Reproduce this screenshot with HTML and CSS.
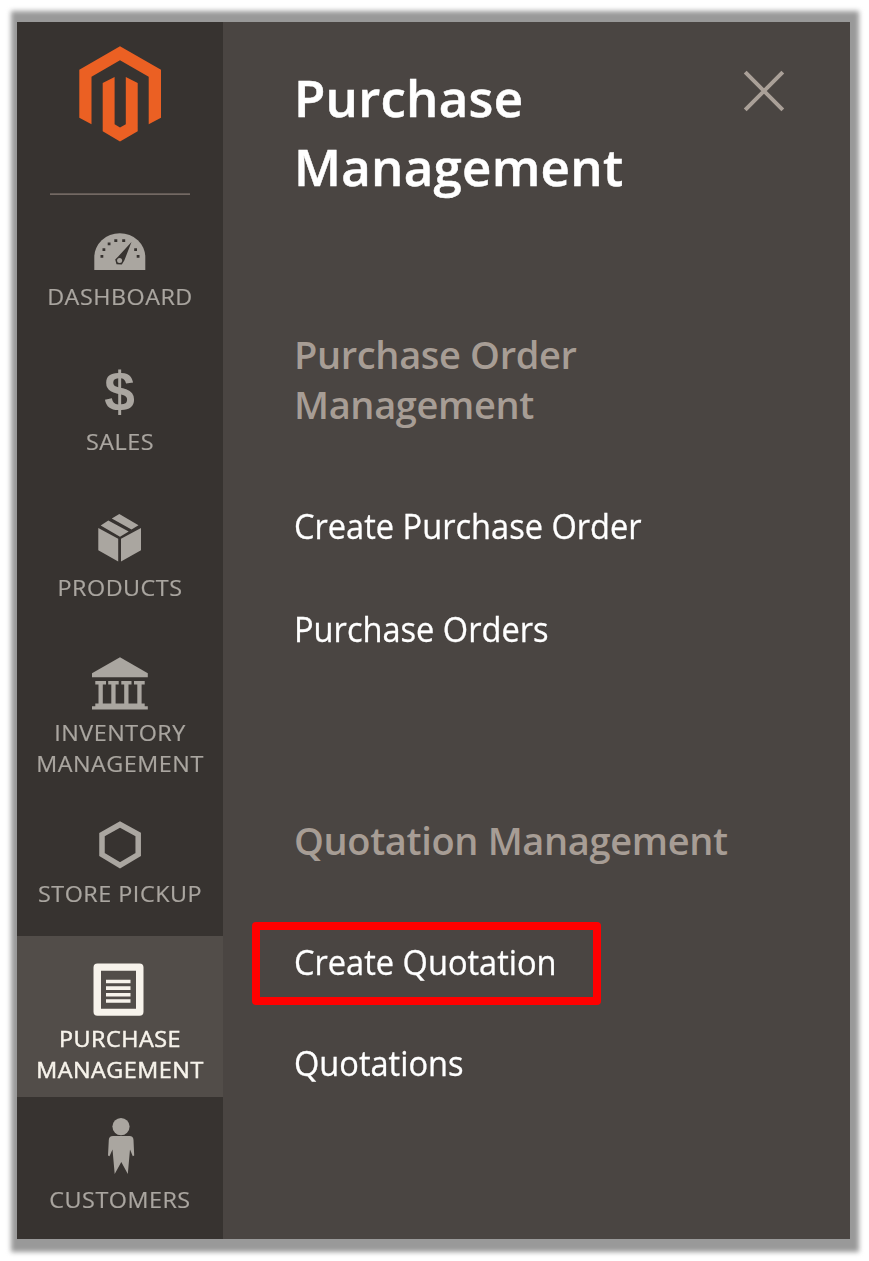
FILE: index.html
```html
<!DOCTYPE html>
<html lang="en">
<head>
<meta charset="utf-8">
<title>Purchase Management</title>
<link rel="stylesheet" href="styles.css">
</head>
<body>
<main class="frame">
  <nav class="sidebar">
    <div class="logo">
      <svg width="206" height="172" viewBox="17 22 206 172">
        <path fill="#eb6023" d="M120 46.3 161 69.7V117.7L148.700 124.300V76.700L120 60.200 91.500 76.700V124.300L79.300 117.700V69.700z"/>
        <path fill="#eb6023" d="M114.600 77V124.300L120 127.600 125.800 124.300V77L137.700 83V131.200L120 141.600 102.700 131.200V83z"/>
      </svg>
    </div>
    <a class="item">
      <svg class="icon" viewBox="17 194 206 87">
        <path d="M94.300 270V257a25.500 23.700 0 0 1 51 0v13z"/>
        <g class="cut">
          <path d="M131.500 242 124.300 260.500 121.800 264.500 116.500 264.300 115.200 259.500 118.200 256.500z"/>
          <path d="M100.500 255h2.800v2.800h-2.800zM102.500 248.300h2.800v2.800h-2.800zM107.700 242.500h2.800v2.800h-2.800zM114.300 239.300h3v2.600h-3zM122.200 239.300h3v2.600h-3zM134.200 248.300h2.800v2.800h-2.800zM136.700 255h2.800v2.800h-2.800z"/>
        </g>
        <circle cx="119.6" cy="260.6" r="2.5"/>
      </svg>
      <span class="label">Dashboard</span>
    </a>
    <a class="item">
      <svg class="icon" viewBox="17 339.500 206 87"><text class="dollar" x="119.600" y="411.500" text-anchor="middle">$</text></svg>
      <span class="label">Sales</span>
    </a>
    <a class="item">
      <svg class="icon" viewBox="17 484.700 206 87">
        <path d="M98.300 527.700 118.200 538.500V561.200L98.300 550zM141 527.700 121 538.500V561.200L141 550zM100.700 525.300 108.300 520.300 128.700 531.200 120 536.400zM111.800 518.200 119.300 513.600 138.500 525 131.500 529.300z"/>
      </svg>
      <span class="label">Products</span>
    </a>
    <a class="item">
      <svg class="icon" viewBox="17 630 206 87">
        <path d="M120 657.300 147.800 673.300V677.300H92V673.300z"/>
        <path d="M95.300 681H106V684.500H95.300zM108.200 681H118.700V684.500H108.200zM121.300 681H131.500V684.500H121.300zM134 681H144.700V684.500H134zM98.500 684H102.800V704H98.500zM111.300 684H115.600V704H111.300zM124.200 684H128.500V704H124.200zM137.300 684H141.600V704H137.300zM95.300 703.500H144.700V706.300H147.800V709.500H92V706.300H95.300z"/>
      </svg>
      <span class="label">Inventory<br>Management</span>
    </a>
    <a class="item">
      <svg class="icon" viewBox="17 791 206 87"><path class="outline" d="M120 824.500 138.200 834.500V854.500L120 865.300 102 854.500V834.500z"/></svg>
      <span class="label">Store Pickup</span>
    </a>
    <a class="item active">
      <svg class="icon" viewBox="17 936.300 206 87">
        <path fill-rule="evenodd" d="M97.500 963.900H139.500a4 4 0 0 1 4 4V1012a4 4 0 0 1-4 4H97.500a4 4 0 0 1-4-4V967.900a4 4 0 0 1 4-4zM101 971V1009H136V971z"/>
        <path d="M106 980H130.500v3.600H106zM106 986.600H130.500v3.600H106zM106 993.200H130.500v3.500H106zM106 999.600H130.500v3.500H106z"/>
      </svg>
      <span class="label">Purchase<br>Management</span>
    </a>
    <a class="item">
      <svg class="icon" viewBox="17 1097 206 87">
        <circle cx="121" cy="1126.600" r="8.600"/>
        <path d="M113 1136H129.500Q133.300 1136 133.500 1140L134.200 1155.500 132.800 1156.300 130 1149.500 127.800 1174 121.300 1162 114.700 1174 112.500 1149.500 109.500 1156.300 108 1155.500 108.800 1140Q109 1136 113 1136z"/>
      </svg>
      <span class="label">Customers</span>
    </a>
  </nav>
  <section class="submenu">
    <header class="head">
      <h1 class="title">Purchase<br>Management</h1>
      <svg class="close" width="42" height="42" viewBox="0 0 42 42"><path d="M2.200 2.200 39.800 39.800M39.800 2.200 2.200 39.800"/></svg>
    </header>
    <div class="group">
      <h2 class="group-title">Purchase Order<br>Management</h2>
      <a class="link"><span class="link-text">Create Purchase Order</span></a>
      <a class="link"><span class="link-text">Purchase Orders</span></a>
    </div>
    <div class="group second">
      <h2 class="group-title">Quotation Management</h2>
      <a class="link marked"><span class="link-text">Create Quotation</span></a>
      <a class="link"><span class="link-text">Quotations</span></a>
    </div>
  </section>
</main>
</body>
</html>
```
FILE: styles.css
```css
*, *::before, *::after { box-sizing: border-box; }
body {
  margin: 0;
  padding: 22px 19px 22px 17px;
  background: #fff;
  font-family: "Open Sans", "Noto Sans", sans-serif;
}
.frame {
  position: relative;
  display: flex;
  width: 833px;
  height: 1217px;
}
.frame::before {
  content: "";
  position: absolute;
  z-index: -1;
  inset: -11px -9px -13px -6px;
  background: #999;
  filter: blur(2.5px);
}
.sidebar {
  width: 206px;
  background: #373330;
  overflow: hidden;
}
.logo {
  height: 172px;
  background: linear-gradient(#504a45, #736963) 33px 171px / 140px 1px no-repeat;
}
.logo svg { display: block; }
.logo + .item {
  background: linear-gradient(#736963, #736963) 33px 0 / 140px 1px no-repeat;
}
.item {
  display: block;
  min-height: 145.300px;
  padding-bottom: 12px;
  color: #aaa6a0;
}
.icon {
  display: block;
  width: 206px;
  height: 87px;
  fill: currentColor;
}
.cut { fill: #373330; }
.outline { fill: none; stroke: currentColor; stroke-width: 5.500; }
.dollar { font: bold 55px "Liberation Sans", Arial, sans-serif; }
.label {
  display: block;
  font-size: 22.400px;
  line-height: 31px;
  text-align: center;
  text-transform: uppercase;
  letter-spacing: 0.500px;
  white-space: nowrap;
  transform: scaleX(1.042);
  -webkit-text-stroke: 0.200px currentColor;
}
.active { background: #524d49; color: #f7f3eb; }
.active .label { -webkit-text-stroke-width: 0.500px; }
.submenu {
  flex: 1;
  padding: 41px 65px 0 71px;
  background: #4a4542;
}
.head {
  display: flex;
  justify-content: space-between;
  align-items: flex-start;
}
.title {
  margin: 0;
  color: #fff;
  font-size: 51px;
  font-weight: 600;
  line-height: 69px;
  letter-spacing: 0.250px;
  -webkit-text-stroke: 0.500px currentColor;
}
.close {
  margin-top: 7px;
  fill: none;
  stroke: #aaa098;
  stroke-width: 4;
}
.group { margin-top: 128px; }
.group.second { margin-top: 163px; }
.group-title {
  margin: 0 0 74px;
  color: #a79d95;
  font-size: 38px;
  font-weight: 600;
  line-height: 50px;
  letter-spacing: -0.350px;
  white-space: nowrap;
}
.link {
  display: block;
  position: relative;
  width: max-content;
  color: #fff;
  font-size: 34px;
  line-height: 46px;
}
.link-text {
  display: block;
  transform: scaleX(0.958);
  transform-origin: left;
  -webkit-text-stroke: 0.300px currentColor;
}
.link + .link { margin-top: 57px; }
.second .link + .link { margin-top: 55px; }
.marked::after {
  content: "";
  position: absolute;
  left: -42px;
  top: -17px;
  width: 349px;
  height: 83px;
  border: 8px solid #f00;
  border-radius: 4px;
}
```
